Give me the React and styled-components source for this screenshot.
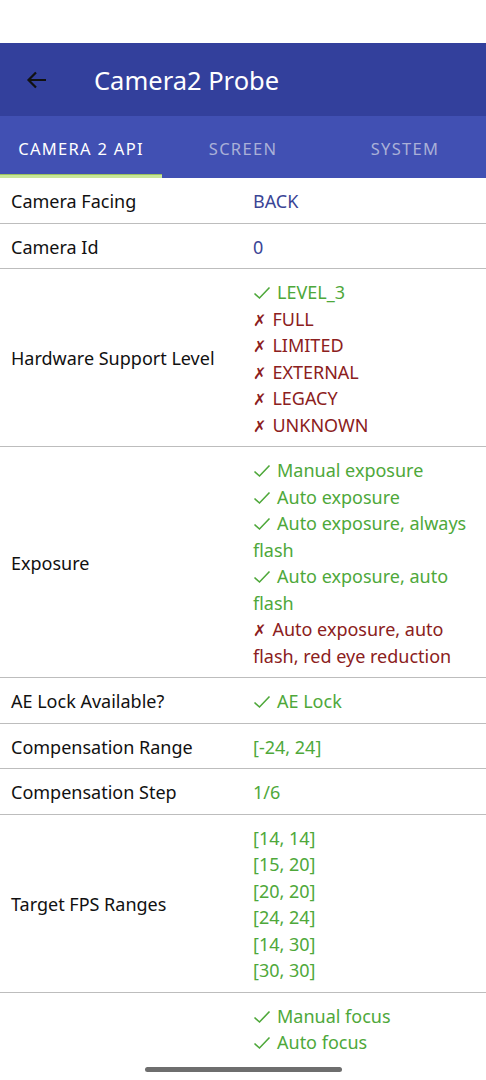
import React from 'react';
import styled, { createGlobalStyle } from 'styled-components';

const GlobalStyle = createGlobalStyle`
  body {
    margin: 0;
    background: #fff;
    font-family: "Noto Sans", Roboto, sans-serif;
  }
`

const Screen = styled.div`
  width: 486px;
  height: 1080px;
  overflow: hidden;
  position: relative;
  background: #fff;
`

const StatusBar = styled.div`
  height: 43px;
  background: #fff;
`

const AppBar = styled.header`
  height: 73px;
  background: #33409c;
  display: flex;
  align-items: center;
  padding: 0 0 0 24px;
  box-sizing: border-box;
`

const BackButton = styled.div`
  width: 26px;
  height: 26px;
  display: flex;
  align-items: center;
  justify-content: center;
  margin-right: 44px;
`

const Title = styled.h1`
  margin: 0;
  color: #fff;
  font-size: 25.5px;
  font-weight: 400;
`

const TabBar = styled.nav`
  height: 62px;
  background: #4150b3;
  display: grid;
  grid-template-columns: repeat(3, 1fr);
`

const Tab = styled.div`
  position: relative;
  display: flex;
  align-items: center;
  justify-content: center;
  font-size: 16.5px;
  letter-spacing: 1.3px;
  color: ${p => (p.$active ? '#fff' : '#aab0d8')};
  padding-top: 2px;

  &::after {
    content: '';
    display: ${p => (p.$active ? 'block' : 'none')};
    position: absolute;
    left: 0;
    right: 0;
    bottom: 0;
    height: 3px;
    background: #c9e79a;
    border-top: 1px solid #9cc25e;
  }
`

const Table = styled.div`
  display: flex;
  flex-direction: column;
`

const Row = styled.div`
  display: grid;
  grid-template-columns: 242px 1fr;
  align-items: center;
  padding: 10px 0 8px;
  border-bottom: 1px solid #bdbdbd;
`

const Label = styled.div`
  padding-left: 11px;
  font-size: 18px;
  color: #111;
  line-height: 26.5px;
`

const Values = styled.div`
  padding-left: 11px;
  padding-right: 10px;
  font-size: 18px;
  line-height: 26.5px;
`

const Value = styled.div`
  color: ${p => (p.$tone === 'blue' ? '#3a4596' : p.$tone === 'red' ? '#8b2020' : '#4ea83a')};
`

const CheckIcon = styled.svg`
  display: inline;
  vertical-align: -1px;
  margin-right: 6px;
`

const CrossGlyph = styled.span`
  font-family: "DejaVu Sans", sans-serif;
  font-size: 16px;
  margin-right: 6px;
  line-height: 1;
`

const NavArea = styled.div`
  position: absolute;
  left: 0;
  right: 0;
  bottom: 0;
  height: 22px;
  background: #fff;
  display: flex;
  justify-content: center;
  align-items: center;
`

const HomeBar = styled.div`
  width: 197px;
  height: 5px;
  border-radius: 3px;
  background: #6e6e6e;
`

function Check() {
  return (
    <CheckIcon width="18" height="14" viewBox="0 0 18 14">
      <path d="M1.5 7.5 L6.5 12 L16.5 1.5" fill="none" stroke="#4ea83a" strokeWidth="1.6" />
    </CheckIcon>
  );
}

const rows = [
  { label: 'Camera Facing', values: [{ t: 'BACK', tone: 'blue' }] },
  { label: 'Camera Id', values: [{ t: '0', tone: 'blue' }] },
  {
    label: 'Hardware Support Level',
    values: [
      { t: 'LEVEL_3', ok: true },
      { t: 'FULL', ok: false },
      { t: 'LIMITED', ok: false },
      { t: 'EXTERNAL', ok: false },
      { t: 'LEGACY', ok: false },
      { t: 'UNKNOWN', ok: false },
    ],
  },
  {
    label: 'Exposure',
    values: [
      { t: 'Manual exposure', ok: true },
      { t: 'Auto exposure', ok: true },
      { t: 'Auto exposure, always flash', ok: true },
      { t: 'Auto exposure, auto flash', ok: true },
      { t: 'Auto exposure, auto flash, red eye reduction', ok: false },
    ],
  },
  { label: 'AE Lock Available?', values: [{ t: 'AE Lock', ok: true }] },
  { label: 'Compensation Range', values: [{ t: '[-24, 24]', tone: 'green' }] },
  { label: 'Compensation Step', values: [{ t: '1/6', tone: 'green' }] },
  {
    label: 'Target FPS Ranges',
    values: ['[14, 14]', '[15, 20]', '[20, 20]', '[24, 24]', '[14, 30]', '[30, 30]'].map(t => ({ t, tone: 'green' })),
  },
  {
    label: 'Focus Modes',
    values: [
      { t: 'Manual focus', ok: true },
      { t: 'Auto focus', ok: true },
      { t: 'Macro focus', ok: true },
      { t: 'Continuous video', ok: true },
      { t: 'Continuous picture', ok: true },
      { t: 'EDOF', ok: false },
      { t: 'Off', ok: true },
    ],
  },
];

export default function App() {
  return (
    <Screen>
      <GlobalStyle />
      <StatusBar />
      <AppBar>
        <BackButton>
          <svg width="24" height="24" viewBox="0 0 24 24">
            <path d="M21 12 H4 M11 4.5 L3.5 12 L11 19.5" fill="none" stroke="#111" strokeWidth="2.2" />
          </svg>
        </BackButton>
        <Title>Camera2 Probe</Title>
      </AppBar>
      <TabBar>
        <Tab $active>CAMERA 2 API</Tab>
        <Tab>SCREEN</Tab>
        <Tab>SYSTEM</Tab>
      </TabBar>
      <Table>
        {rows.map((row, i) => (
          <Row key={i}>
            <Label>{row.label}</Label>
            <Values>
              {row.values.map((v, j) => {
                const tone = v.tone || (v.ok ? 'green' : 'red');
                return (
                  <Value key={j} $tone={tone}>
                    {v.ok === true && <Check />}
                    {v.ok === false && <CrossGlyph>✗</CrossGlyph>}
                    {v.t}
                  </Value>
                );
              })}
            </Values>
          </Row>
        ))}
      </Table>
      <NavArea>
        <HomeBar />
      </NavArea>
    </Screen>
  );
}
